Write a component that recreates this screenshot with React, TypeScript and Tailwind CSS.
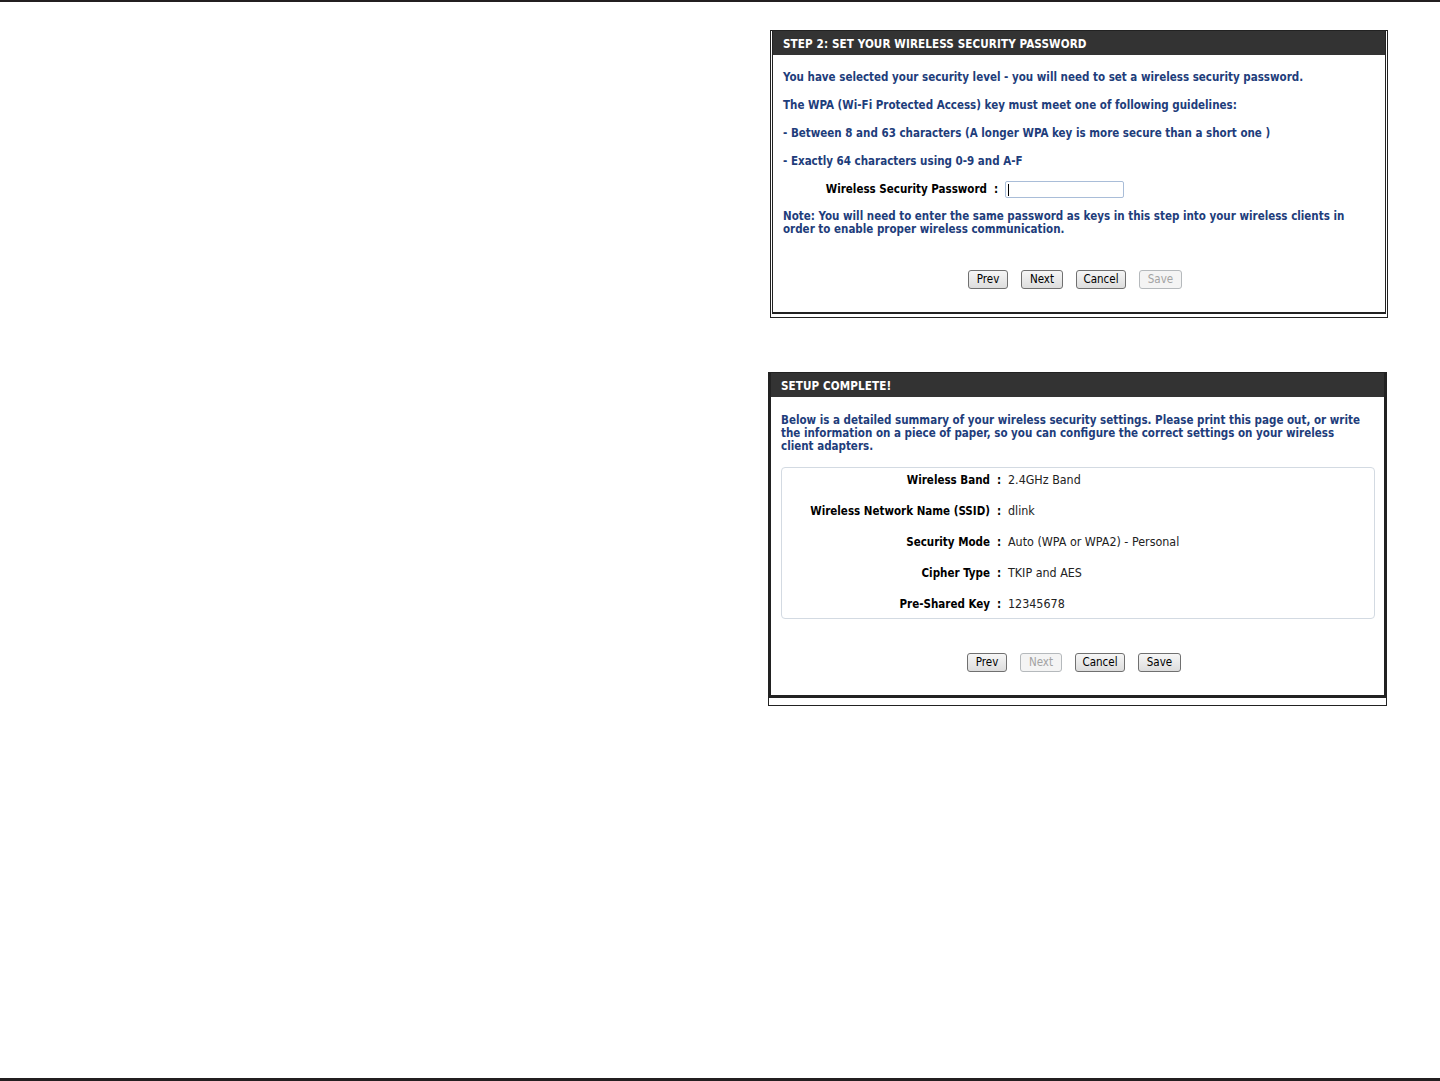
import React from "react";

const font = "font-['DejaVu_Sans_Condensed','DejaVu_Sans',sans-serif]";

function Btn({ label, width, disabled }: { label: string; width: string; disabled?: boolean }) {
  return (
    <button
      className={`${width} h-[19px] rounded-[3px] border text-[11.5px] font-normal leading-none ${
        disabled
          ? "border-[#b5b9bc] bg-[#f4f4f4] text-[#a3a3a3]"
          : "border-[#707070] bg-gradient-to-b from-[#f6f6f6] to-[#dddddd] text-black"
      }`}
    >
      {label}
    </button>
  );
}

const summary = [
  { label: "Wireless Band", value: "2.4GHz Band" },
  { label: "Wireless Network Name (SSID)", value: "dlink" },
  { label: "Security Mode", value: "Auto (WPA or WPA2) - Personal" },
  { label: "Cipher Type", value: "TKIP and AES" },
  { label: "Pre-Shared Key", value: "12345678" },
];

export default function App() {
  return (
    <div className={`w-[1440px] h-[1081px] bg-white border-t-2 border-b-[3px] border-[#231f20] ${font}`}>
      <div className="pl-[768px] pt-[28px] flex flex-col">
        {/* step 2 */}
        <div className="ml-[2px] w-[618px] border border-[#222] px-[1px] pb-[3px]">
          <div className="border-x border-b-2 border-[#222]">
            <div className="h-[24px] bg-[#333333] pl-[10px] pt-[3px] flex items-center text-white text-[11.6px] tracking-[0.1px] font-bold">
              STEP 2: SET YOUR WIRELESS SECURITY PASSWORD
            </div>
            <div className="pl-[10px] pt-[15px] text-[11.5px] font-bold text-[#1e3d7b]">
              <div className="flex flex-col gap-[14px] leading-[14px]">
                <p>You have selected your security level - you will need to set a wireless security password.</p>
                <p>The WPA (Wi-Fi Protected Access) key must meet one of following guidelines:</p>
                <p>- Between 8 and 63 characters (A longer WPA key is more secure than a short one )</p>
                <p>- Exactly 64 characters using 0-9 and A-F</p>
              </div>
              <div className="mt-[13px] flex items-center h-[17px]">
                <span className="w-[204px] text-right text-black">Wireless Security Password</span>
                <span className="w-[18px] text-center text-black">:</span>
                <div className="w-[119px] h-[17px] border border-[#a9bdd8] rounded-[2px] flex items-center pl-[2px]">
                  <span className="w-px h-[12px] bg-black" />
                </div>
              </div>
              <p className="mt-[12px] leading-[13px] pr-[24px]">
                Note: You will need to enter the same password as keys in this step into your wireless clients in order to
                enable proper wireless communication.
              </p>
              <div className="mt-[34px] pb-[23px] pl-[185px] flex gap-[13px]">
                <Btn label="Prev" width="w-[40px]" />
                <Btn label="Next" width="w-[42px]" />
                <Btn label="Cancel" width="w-[50px]" />
                <Btn label="Save" width="w-[43px]" disabled />
              </div>
            </div>
          </div>
        </div>

        {/* setup complete */}
        <div className="mt-[54px] w-[619px] border border-[#222] pb-[7px]">
          <div className="border-l-2 border-r-2 border-b-[3px] border-[#222]">
            <div className="h-[24px] bg-[#333333] pl-[10px] pt-[3px] flex items-center text-white text-[11.6px] tracking-[0.1px] font-bold">
              SETUP COMPLETE!
            </div>
            <div className="pl-[10px] pr-[9px] pt-[17px] text-[11.5px]">
              <p className="w-[583px] font-bold leading-[13px] text-[#1e3d7b]">
                Below is a detailed summary of your wireless security settings. Please print this page out, or write the
                information on a piece of paper, so you can configure the correct settings on your wireless client adapters.
              </p>
              <div className="mt-[14px] border border-[#d3dae2] rounded-[4px] pt-[5px] pb-[7px] flex flex-col gap-[17px]">
                {summary.map((row) => (
                  <div key={row.label} className="flex items-center h-[14px] leading-[14px]">
                    <span className="w-[208px] text-right font-bold text-black">{row.label}</span>
                    <span className="w-[18px] text-center font-bold text-black">:</span>
                    <span className="text-[12.4px] text-[#222]">{row.value}</span>
                  </div>
                ))}
              </div>
              <div className="mt-[34px] pb-[23px] pl-[186px] flex gap-[13px]">
                <Btn label="Prev" width="w-[40px]" />
                <Btn label="Next" width="w-[42px]" disabled />
                <Btn label="Cancel" width="w-[50px]" />
                <Btn label="Save" width="w-[43px]" />
              </div>
            </div>
          </div>
        </div>
      </div>
    </div>
  );
}
